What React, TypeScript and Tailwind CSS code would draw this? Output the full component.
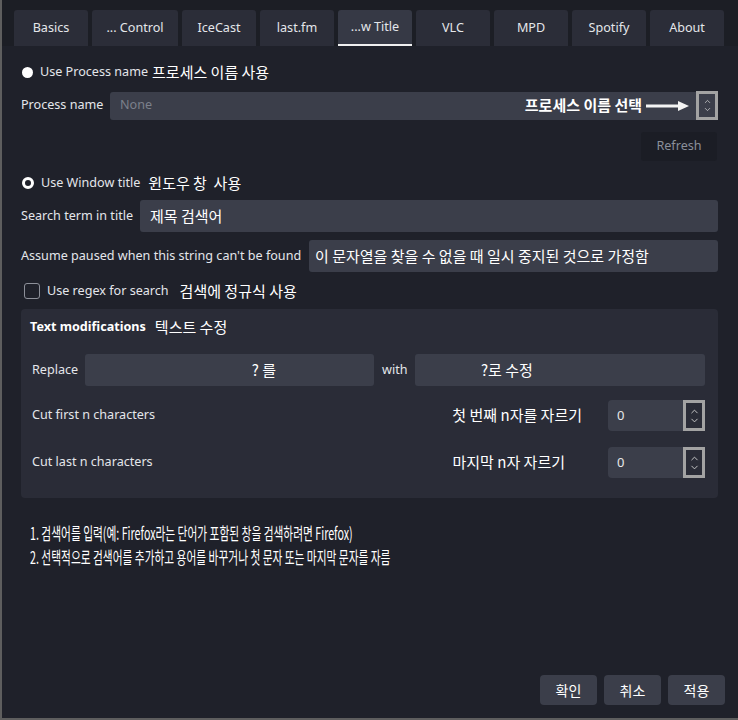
import { ChevronUp, ChevronDown } from 'lucide-react'

const TABS = [
  { label: 'Basics', w: 'w-[74px]' },
  { label: '... Control', w: 'w-[86px]' },
  { label: 'IceCast', w: 'w-[74px]' },
  { label: 'last.fm', w: 'w-[74px]' },
  { label: '...w Title', w: 'w-[74px]', active: true },
  { label: 'VLC', w: 'w-[74px]' },
  { label: 'MPD', w: 'w-[74px]' },
  { label: 'Spotify', w: 'w-[74px]' },
  { label: 'About', w: 'w-[74px]' },
]

const ko = "font-['Noto_Sans_CJK_KR',sans-serif] text-white"

function SpinArrows() {
  return (
    <div className="w-[22px] h-[31px] border-[3px] border-[#a3a3a3] flex flex-col items-center justify-center">
      <ChevronUp size={11} strokeWidth={2} className="text-[#d0d0d0] -mb-[2px]" />
      <ChevronDown size={11} strokeWidth={2} className="text-[#d0d0d0]" />
    </div>
  )
}

function SpinBox() {
  return (
    <div className="flex items-center">
      <div className="w-[75px] h-[31px] bg-[#3b3e4a] rounded-l-[4px] flex items-center pl-[9px] text-[13px] text-[#e8e8e8]">
        0
      </div>
      <SpinArrows />
    </div>
  )
}

export default function App() {
  return (
    <div className="w-[738px] h-[720px] bg-[#1f212a] border-l-2 border-b-2 border-[#5e5e5e] flex flex-col font-['Noto_Sans','Noto_Sans_CJK_KR',sans-serif] text-[12.6px] text-[#e4e6ea] overflow-hidden">
      {/* Tabs */}
      <div className="bg-[#1c1e25] pt-[10px] pl-[12px] flex gap-[4px]">
        {TABS.map((t) => (
          <div
            key={t.label}
            className={`${t.w} h-[36px] rounded-t-[3px] flex items-center justify-center ${
              t.active ? 'bg-[#363945] border-b-2 border-[#f0f0f0]' : 'bg-[#2b2d38]'
            }`}
          >
            {t.label}
          </div>
        ))}
      </div>

      <div className="flex flex-col pl-[19px] pr-[20px]">
        {/* Use process name */}
        <div className="mt-[16px] h-[20px] flex items-center gap-[7px] pl-[1px] whitespace-nowrap">
          <div className="w-[11px] h-[11px] rounded-full bg-white" />
          <span>Use Process name</span>
          <span className={`${ko} text-[15px] -ml-[3px]`}>프로세스 이름 사용</span>
        </div>

        <div className="mt-[9px] flex items-center">
          <span className="w-[89px] shrink-0 whitespace-nowrap">Process name</span>
          <div className="flex-1 h-[28px] bg-[#3b3e4a] rounded-l-[3px] flex items-center pl-[10px] pr-[4px]">
            <span className="text-[#7c808b] flex-1">None</span>
            <span className={`${ko} text-[15px] font-bold`}>프로세스 이름 선택</span>
            <svg width="44" height="12" viewBox="0 0 44 12" className="ml-[4px] mr-[2px]">
              <line x1="0" y1="6" x2="34" y2="6" stroke="#f4f4f4" strokeWidth="3" />
              <path d="M32 1 L43 6 L32 11 Z" fill="#f4f4f4" />
            </svg>
          </div>
          <div className="w-[22px] h-[29px] border-[3px] border-[#a3a3a3] bg-[#3b3e4a] flex flex-col items-center justify-center">
            <ChevronUp size={9} strokeWidth={2} className="text-[#d0d0d0] -mb-[1px]" />
            <ChevronDown size={9} strokeWidth={2} className="text-[#d0d0d0]" />
          </div>
        </div>

        <div className="mt-[12px] flex justify-end pr-[1px]">
          <div className="w-[76px] h-[29px] bg-[#1b1d25] rounded-[3px] flex items-center justify-center text-[#8a8f9a]">
            Refresh
          </div>
        </div>

        {/* Use window title */}
        <div className="mt-[12px] h-[20px] flex items-center gap-[7px] pl-[1px] whitespace-nowrap">
          <div className="w-[12px] h-[12px] rounded-full border-[3px] border-white" />
          <span>Use Window title</span>
          <span className={`${ko} text-[15px] ml-[1px]`}>윈도우 창&nbsp; 사용</span>
        </div>

        <div className="mt-[7px] flex items-center">
          <span className="w-[119px] shrink-0 whitespace-nowrap">Search term in title</span>
          <div className="flex-1 h-[32px] bg-[#3b3e4a] rounded-[3px] flex items-center pl-[10px]">
            <span className={`${ko} text-[15px]`}>제목 검색어</span>
          </div>
        </div>

        <div className="mt-[8px] flex items-center">
          <span className="w-[288px] shrink-0 whitespace-nowrap">Assume paused when this string can't be found</span>
          <div className="flex-1 h-[32px] bg-[#3b3e4a] rounded-[3px] flex items-center pl-[6px]">
            <span className={`${ko} text-[15px]`}>이 문자열을 찾을 수 없을 때 일시 중지된 것으로 가정함</span>
          </div>
        </div>

        <div className="mt-[10px] h-[18px] flex items-center pl-[3px] whitespace-nowrap">
          <div className="w-[16px] h-[16px] rounded-[3px] border border-[#8d9099]" />
          <span className="ml-[7px]">Use regex for search</span>
          <span className={`${ko} text-[15px] ml-[11px]`}>검색에 정규식 사용</span>
        </div>

        {/* Text modifications group */}
        <div className="mt-[9px] h-[189px] bg-[#2a2c37] rounded-[4px] pl-[11px] pr-[13px] flex flex-col">
          <div className="mt-[8px] h-[20px] flex items-center -ml-[2px] whitespace-nowrap">
            <span className="font-bold text-white">Text modifications</span>
            <span className={`${ko} text-[15px] ml-[9px]`}>텍스트 수정</span>
          </div>

          <div className="mt-[17px] flex items-center">
            <span className="w-[53px] shrink-0">Replace</span>
            <div className="w-[289px] h-[32px] bg-[#3b3e4a] rounded-[3px] flex items-center justify-center">
              <span className={`${ko} text-[15px] ml-[69px]`}>? 를</span>
            </div>
            <span className="w-[41px] pl-[8px] shrink-0">with</span>
            <div className="flex-1 h-[32px] bg-[#3b3e4a] rounded-[3px] flex items-center pl-[66px]">
              <span className={`${ko} text-[15px]`}>?로 수정</span>
            </div>
          </div>

          <div className="mt-[14px] flex items-center">
            <span className="flex-1">Cut first n characters</span>
            <span className={`${ko} text-[15px] mr-[26px]`}>첫 번째 n자를 자르기</span>
            <SpinBox />
          </div>

          <div className="mt-[16px] flex items-center">
            <span className="flex-1">Cut last n characters</span>
            <span className={`${ko} text-[15px] mr-[43px]`}>마지막 n자 자르기</span>
            <SpinBox />
          </div>
        </div>

        {/* Instructions */}
        <div className={`${ko} mt-[23px] pl-[9px] text-[17px] leading-[24px] flex flex-col`}>
          <span className="origin-left scale-x-[0.63] whitespace-nowrap">
            1. 검색어를 입력(예: Firefox라는 단어가 포함된 창을 검색하려면 Firefox)
          </span>
          <span className="origin-left scale-x-[0.63] whitespace-nowrap">
            2. 선택적으로 검색어를 추가하고 용어를 바꾸거나 첫 문자 또는 마지막 문자를 자름
          </span>
        </div>
      </div>

      {/* Buttons */}
      <div className="mt-auto mb-[13px] flex justify-end gap-[7px] pr-[13px]">
        {['확인', '취소', '적용'].map((b) => (
          <div
            key={b}
            className={`${ko} w-[57px] h-[30px] bg-[#3b3e4a] rounded-[4px] flex items-center justify-center text-[14px]`}
          >
            {b}
          </div>
        ))}
      </div>
    </div>
  )
}
